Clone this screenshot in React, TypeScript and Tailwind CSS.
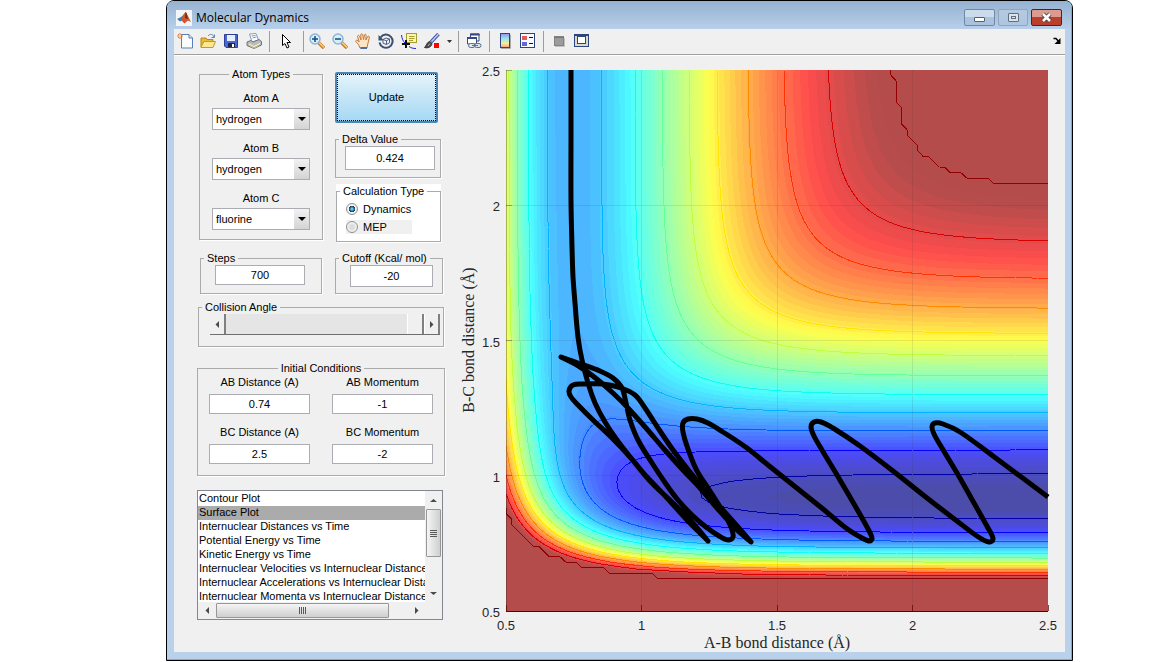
import { useMemo, useState } from "react"
import type { ReactNode } from "react"

/* ---------- potential surface ---------- */

const STEP = 0.02
const COUNT = 101
const CEILING = -22
const BANDS = 64

interface Bond {
  d: number
  beta: number
  re: number
  sato: number
}

const HH: Bond = { d: 109.449, beta: 1.942, re: 0.7419, sato: 0.18 }
const HF: Bond = { d: 141.196, beta: 2.2187, re: 0.917, sato: 0.18 }

function integrals(bond: Bond, r: number) {
  const e = Math.exp(-bond.beta * (r - bond.re))
  const f = bond.d / (4 * (1 + bond.sato))
  const k = bond.sato
  return {
    q: f * ((3 + k) * e * e - (2 + 6 * k) * e),
    j: f * ((1 + 3 * k) * e * e - (6 + 2 * k) * e),
  }
}

function potential(rab: number, rbc: number) {
  const a = integrals(HH, rab)
  const b = integrals(HF, rbc)
  const c = integrals(HF, rab + rbc)
  const ex = (a.j - b.j) ** 2 + (b.j - c.j) ** 2 + (c.j - a.j) ** 2
  return Math.min(CEILING, a.q + b.q + c.q - Math.sqrt(ex / 2))
}

// plot area inside the svg
const PX = 51
const PY = 13
const PW = 542
const PH = 541

const toX = (r: number) => PX + ((r - 0.5) / 2) * PW
const toY = (r: number) => PY + PH - ((r - 0.5) / 2) * PH

type Point = [number, number]
type Segment = { from: string; to: string; a: Point; b: Point; edge: boolean }

// The grid gets one extra node on each side, placed on the border itself,
// so that every region comes out as a closed loop.
function segments(grid: number[][], level: number): Segment[] {
  const n = COUNT + 2
  const value = (i: number, j: number) =>
    i === 0 || j === 0 || i === n - 1 || j === n - 1 ? -100000 : grid[j - 1][i - 1]
  const clamp = (i: number) => Math.min(COUNT - 1, Math.max(0, i - 1)) * STEP + 0.5
  const cross = (i: number, j: number, k: number, l: number): Point => {
    const v = value(i, j)
    const w = value(k, l)
    const t = (level - v) / (w - v)
    return [
      toX(clamp(i) + t * (clamp(k) - clamp(i))),
      toY(clamp(j) + t * (clamp(l) - clamp(j))),
    ]
  }
  const out: Segment[] = []
  for (let j = 0; j < n - 1; j++) {
    for (let i = 0; i < n - 1; i++) {
      const s = [value(i, j), value(i + 1, j), value(i + 1, j + 1), value(i, j + 1)].map((v) => v >= level)
      const hits: { key: string; p: Point }[] = []
      if (s[0] !== s[1]) hits.push({ key: `h${i},${j}`, p: cross(i, j, i + 1, j) })
      if (s[1] !== s[2]) hits.push({ key: `v${i + 1},${j}`, p: cross(i + 1, j, i + 1, j + 1) })
      if (s[3] !== s[2]) hits.push({ key: `h${i},${j + 1}`, p: cross(i, j + 1, i + 1, j + 1) })
      if (s[0] !== s[3]) hits.push({ key: `v${i},${j}`, p: cross(i, j, i, j + 1) })
      const edge = i === 0 || j === 0 || i === n - 2 || j === n - 2
      for (let k = 0; k + 1 < hits.length; k += 2) {
        out.push({ from: hits[k].key, to: hits[k + 1].key, a: hits[k].p, b: hits[k + 1].p, edge })
      }
    }
  }
  return out
}

const fmt = (p: Point) => `${p[0].toFixed(1)} ${p[1].toFixed(1)}`

function regionPath(segs: Segment[]) {
  const links = new Map<string, number[]>()
  segs.forEach((s, i) => {
    for (const key of [s.from, s.to]) {
      const list = links.get(key)
      if (list) list.push(i)
      else links.set(key, [i])
    }
  })
  const used = new Set<number>()
  let d = ""
  segs.forEach((first, start) => {
    if (used.has(start)) return
    used.add(start)
    d += `M${fmt(first.a)}L${fmt(first.b)}`
    let key = first.to
    for (;;) {
      const next = links.get(key)?.find((i) => !used.has(i))
      if (next === undefined) break
      used.add(next)
      const s = segs[next]
      const forward = s.from === key
      d += `L${fmt(forward ? s.b : s.a)}`
      key = forward ? s.to : s.from
    }
    d += "Z"
  })
  return d
}

function jet(t: number) {
  const u = Math.min(t, 0.98)
  const ch = (c: number) => Math.max(0, Math.min(1, 1.5 - Math.abs(4 * u - c)))
  return [ch(3), ch(2), ch(1)]
}

const solid = (t: number) => `rgb(${jet(t).map((c) => Math.round(c * 255)).join(",")})`
const faded = (t: number) => `rgb(${jet(t).map((c) => Math.round(76 + c * 179)).join(",")})`

function buildSurface() {
  const grid: number[][] = []
  let min = 0
  for (let j = 0; j < COUNT; j++) {
    const row: number[] = []
    for (let i = 0; i < COUNT; i++) {
      const v = potential(0.5 + i * STEP, 0.5 + j * STEP)
      min = Math.min(min, v)
      row.push(v)
    }
    grid.push(row)
  }
  const range = CEILING - min
  const bands = []
  for (let b = 1; b < BANDS; b++) {
    bands.push({
      color: faded((b + 0.5) / BANDS),
      d: regionPath(segments(grid, min + (range * b) / BANDS)),
    })
  }
  const lines = []
  for (let k = 0; k < 12; k++) {
    const level = CEILING - k * 10.4
    lines.push({
      color: solid((level - min) / range),
      d: segments(grid, level)
        .filter((s) => !s.edge)
        .map((s) => `M${fmt(s.a)}L${fmt(s.b)}`)
        .join(""),
    })
  }
  return { bands, lines }
}

/* ---------- trajectory ---------- */

// a repeated point marks a sharp turn
const TRAJECTORY: Point[] = [
  [116, 13], [116, 80], [116, 143], [117, 190], [118, 220], [120, 246], [123, 280], [127, 303],
  [133, 326], [140, 346], [150, 365], [162, 383], [176, 401], [195, 424], [218, 446], [236, 464], [253, 484], [253, 484],
  [233, 464], [212, 441], [192, 420], [175, 400], [157, 381], [138, 363], [123, 348], [116, 340], [114, 334], [118, 328],
  [129, 327], [148, 327], [166, 331], [180, 338], [190, 351], [203, 371], [218, 393], [235, 415], [250, 433],
  [267, 452], [283, 470], [296, 485], [296, 485],
  [280, 471], [262, 451], [245, 431], [227, 412], [209, 392], [191, 371], [173, 351], [159, 337], [143, 323], [125, 310], [106, 300], [106, 300],
  [126, 307], [145, 314], [158, 321], [167, 331], [171, 346], [175, 363], [183, 383], [197, 406], [211, 427],
  [223, 443], [237, 458], [251, 470], [264, 479], [273, 483], [278, 480], [276, 470], [268, 455], [255, 434], [242, 414],
  [233, 392], [228, 375], [228, 366], [233, 362], [242, 362], [253, 366], [268, 375], [292, 391], [313, 408],
  [338, 428], [368, 452], [391, 471], [407, 481], [415, 484], [417, 481], [412, 470], [399, 447], [382, 418],
  [367, 393], [359, 379], [356, 370], [359, 365], [366, 365], [378, 371], [405, 389], [438, 414], [472, 441],
  [502, 464], [522, 479], [534, 485], [538, 482], [533, 471], [519, 446], [502, 416], [487, 391], [479, 377],
  [477, 370], [480, 366], [488, 367], [505, 375], [538, 399], [565, 419], [593, 440],
]

function smooth(points: Point[]) {
  let d = `M${points[0][0]} ${points[0][1]}`
  for (let i = 0; i < points.length - 1; i++) {
    const p0 = points[Math.max(0, i - 1)]
    const p1 = points[i]
    const p2 = points[i + 1]
    const p3 = points[Math.min(points.length - 1, i + 2)]
    // keep handles short where neighbouring points are unevenly spaced
    const len = Math.hypot(p2[0] - p1[0], p2[1] - p1[1])
    const ta = Math.hypot(p2[0] - p0[0], p2[1] - p0[1]) || 1
    const tb = Math.hypot(p3[0] - p1[0], p3[1] - p1[1]) || 1
    const c1: Point = [p1[0] + ((p2[0] - p0[0]) / ta) * (len / 3), p1[1] + ((p2[1] - p0[1]) / ta) * (len / 3)]
    const c2: Point = [p2[0] - ((p3[0] - p1[0]) / tb) * (len / 3), p2[1] - ((p3[1] - p1[1]) / tb) * (len / 3)]
    d += `C${fmt(c1)} ${fmt(c2)} ${p2[0]} ${p2[1]}`
  }
  return d
}

const TICKS = [0.5, 1, 1.5, 2, 2.5]

function SurfacePlot() {
  const { bands, lines } = useMemo(buildSurface, [])
  return (
    <svg viewBox="0 0 610 595" className="block w-full" role="img" aria-label="Potential energy surface">
      <rect x={PX} y={PY} width={PW} height={PH} fill={faded(0.5 / BANDS)} />
      <g shapeRendering="crispEdges">
        {bands.map((band, i) => (
          <path key={i} d={band.d} fill={band.color} fillRule="evenodd" />
        ))}
        {lines.map((line, i) => (
          <path key={i} d={line.d} fill="none" stroke={line.color} />
        ))}
        {TICKS.slice(1, 4).map((t) => (
          <g key={t} stroke="#262626" strokeOpacity={0.1}>
            <path d={`M${toX(t)} ${PY}V${PY + PH}`} />
            <path d={`M${PX} ${toY(t)}H${PX + PW}`} />
          </g>
        ))}
        <path d={`M${PX} ${PY}V${PY + PH}`} stroke="#262626" strokeOpacity={0.35} />
        <path d={`M${PX} ${PY + PH}H${PX + PW}`} stroke="#5c0000" />
        {TICKS.map((t) => (
          <g key={t} strokeOpacity={0.7}>
            <path d={`M${toX(t)} ${PY + PH}v-6`} stroke="#5c0000" />
            <path d={`M${PX} ${toY(t)}h6`} stroke="#262626" strokeOpacity={0.35} />
          </g>
        ))}
      </g>
      <path d={smooth(TRAJECTORY)} fill="none" stroke="#000" strokeWidth={5} strokeLinejoin="round" />
      <g className="font-['Liberation_Sans',Arial,sans-serif] text-[13px]" fill="#262626">
        {TICKS.map((t) => (
          <g key={t}>
            <text x={toX(t)} y={573} textAnchor="middle">{t}</text>
            <text x={45} y={toY(t) + 6} textAnchor="end">{t}</text>
          </g>
        ))}
      </g>
      <g className="font-['Liberation_Serif',serif] text-[16px]" fill="#262626">
        <text x={322} y={591} textAnchor="middle">A-B bond distance (Å)</text>
        <text transform="translate(19 283) rotate(-90)" textAnchor="middle">B-C bond distance (Å)</text>
      </g>
    </svg>
  )
}

/* ---------- toolbar ---------- */

function Tool({ label, children, className = "w-4" }: { label: string; children: ReactNode; className?: string }) {
  return (
    <button type="button" aria-label={label} title={label} className={`h-4 shrink-0 ${className}`}>
      {children}
    </button>
  )
}

function Icon({ children }: { children: ReactNode }) {
  return (
    <svg width="16" height="16" viewBox="0 0 16 16" fill="none" className="block">
      {children}
    </svg>
  )
}

function Separator() {
  return <span className="h-[21px] w-px shrink-0 bg-[#9d9d9d]" />
}

function Magnifier({ plus }: { plus?: boolean }) {
  return (
    <Icon>
      <path d="M9.500 9.500L15 15" stroke="#b8742a" strokeWidth="3.400" />
      <path d="M10 9.500L15 14.300" stroke="#ffc56b" strokeWidth="1.800" />
      <circle cx="6" cy="6" r="5" fill="#d3f1fb" stroke="#8fb3d9" strokeWidth="1.500" />
      <path d={plus ? "M3 6H9M6 3V9" : "M3 6H9"} stroke="#17497c" strokeWidth="1.500" />
    </Icon>
  )
}

function Toolbar() {
  return (
    <div role="toolbar" className="flex h-[26px] items-center border-b border-[#a0a0a0] bg-[#f0f0f0] pr-1 pb-px pl-[3px]">
      <div className="flex items-center gap-[7px]">
        <Tool label="New Figure">
          <Icon>
            <path d="M4.500 1.500H12L15.500 5V15H4.500Z" fill="#fafdff" stroke="#5a7fb5" />
            <path d="M12 1.500V5H15.500" fill="#d5e4f7" stroke="#5a7fb5" />
            <path d="M3 0V6M0 3H6M1 1L5 5M5 1L1 5" stroke="#e2763a" />
            <circle cx="3" cy="3" r="1.200" fill="#ffd37a" />
          </Icon>
        </Tool>
        <Tool label="Open File">
          <Icon>
            <path d="M1 14V5H6L7 6.500H13V14Z" fill="#e8b93c" stroke="#b58a17" />
            <path d="M1 14L4 8.500H15.500L13 14.500H1Z" fill="#ffe78f" stroke="#c29a22" />
            <path d="M8 3C10 0.500 13 1 14 4M14.500 1.500V4.500H11.500" stroke="#5b84b5" />
          </Icon>
        </Tool>
        <Tool label="Save Figure">
          <Icon>
            <path d="M1.500 1.500H14.500V14.500H3L1.500 13Z" fill="#4c66d2" stroke="#2c3f9c" />
            <rect x="4" y="2" width="8" height="6" fill="#e6effc" />
            <rect x="5" y="10" width="7" height="4" fill="#1d2545" />
            <rect x="9" y="11" width="2" height="3" fill="#fff" />
          </Icon>
        </Tool>
        <Tool label="Print Figure">
          <Icon>
            <path d="M3.500 1L10 0.500L12.500 7L6 9Z" fill="#fff" stroke="#8d9bb0" />
            <path d="M5.500 3L9.500 2.500M6.500 5L10.500 4" stroke="#7b98c4" />
            <path d="M1 9L5 7.500L7 9L13 6.500L15.500 8.500V12L8 15.500L1 12.500Z" fill="#b9bdc1" stroke="#6e7276" />
            <path d="M3 11L8 13.500L14 10.500" stroke="#f4f4f4" />
            <path d="M4 13L8 15L12 13" stroke="#d6c53c" />
          </Icon>
        </Tool>
      </div>
      <div className="flex items-center gap-[10px] pl-[7px]">
        <Separator />
        <Tool label="Edit Plot" className="w-[13px]">
          <svg width="13" height="16" viewBox="0 0 13 16" className="block">
            <path d="M2.500 1.500V12.500L5 10.500L7 15L9 14L7 9.500H10.500Z" fill="#fff" stroke="#000" />
          </svg>
        </Tool>
        <Separator />
      </div>
      <div className="flex items-center gap-[7px] pl-[5px]">
        <Tool label="Zoom In"><Magnifier plus /></Tool>
        <Tool label="Zoom Out"><Magnifier /></Tool>
        <Tool label="Pan">
          <Icon>
            <path
              d="M5 15L3.500 11.500L0.800 8.500C0.500 7 2 6.800 3 7.800L4.200 9L2.500 3.500C2.500 2 4 2 4.500 3.300L6 7L5.800 1.800C6 0.500 7.500 0.500 7.800 1.800L8.500 6.500L9.500 1.800C10 0.800 11.300 1.200 11.200 2.500L10.800 7L12.800 3.500C13.600 2.800 14.800 3.500 14.300 4.800L12.800 11L12 15Z"
              fill="#ffe3c2"
              stroke="#c07a3e"
            />
            <path d="M5.500 15H12" stroke="#4b6fae" strokeWidth="2" />
          </Icon>
        </Tool>
        <Tool label="Rotate 3D">
          <Icon>
            <path d="M2.500 4.500A6.600 6.600 0 1 1 1.500 9.500" stroke="#3d4f70" strokeWidth="2" />
            <path d="M0.500 2V7.500H6Z" fill="#3d4f70" />
            <path d="M5 6.500L8 5L11.500 6V9.800L8.500 11.500L5 10.200ZM5 6.500L8.500 7.800L11.500 6M8.500 7.800V11.500" fill="#eef2f8" stroke="#4e6288" />
          </Icon>
        </Tool>
        <Tool label="Data Cursor">
          <Icon>
            <rect x="5.500" y="0.500" width="10" height="9" fill="#fbf6a8" stroke="#a59b35" />
            <path d="M8 3.500H13.500M8 5.500H13.500M8 7.500H12" stroke="#a59b35" />
            <path d="M0.500 2C1 6 2 8 4 10M8 13.500C10 15 12 15.500 15 15.500" stroke="#2222dd" />
            <path d="M5 7V15M1 11H9" stroke="#111" strokeWidth="2" />
          </Icon>
        </Tool>
        <Tool label="Brush Data">
          <Icon>
            <path d="M14.500 1L7 9" stroke="#4351a8" strokeWidth="3.500" />
            <path d="M14.500 1L7.500 8.500" stroke="#c5cdf7" strokeWidth="1.500" />
            <path d="M0.500 14.500C2.500 13 2.500 9.500 5.500 8.500L8 10.500C7.500 14 4 15.500 0.500 14.500Z" fill="#4b4b4b" stroke="#2e2e2e" />
            <path d="M4 13L6 10.500" stroke="#bbb" />
            <rect x="10" y="10" width="5" height="5" fill="#f00" />
          </Icon>
        </Tool>
        <Tool label="Brush colour" className="w-[5px]">
          <svg width="5" height="16" viewBox="0 0 5 16" className="block">
            <path d="M0 7H5L2.500 10Z" fill="#333" />
          </svg>
        </Tool>
      </div>
      <div className="flex items-center gap-[7px] pl-[6px]">
        <Separator />
        <Tool label="Link Plot">
          <Icon>
            <path d="M4.500 1H13V8H4.500Z" fill="#fff" stroke="#33497f" />
            <path d="M4 1.500H13.500" stroke="#33497f" strokeWidth="2" />
            <path d="M1.500 4.500H10.500V11H1.500Z" fill="#fff" stroke="#33497f" />
            <path d="M1 5H11" stroke="#33497f" strokeWidth="2" />
            <rect x="2.500" y="10.500" width="6.500" height="4" rx="2" fill="#dfe6ee" stroke="#57708d" />
            <rect x="8.500" y="10.500" width="6.500" height="4" rx="2" fill="#dfe6ee" stroke="#57708d" />
            <path d="M6 12.500H12" stroke="#57708d" />
          </Icon>
        </Tool>
        <Separator />
      </div>
      <div className="flex items-center gap-[7px] pl-[7px]">
        <Tool label="Insert Colorbar">
          <Icon>
            <defs>
              <linearGradient id="bar" x1="0" y1="0" x2="0" y2="1">
                <stop offset="0" stopColor="#a08cf0" />
                <stop offset="0.350" stopColor="#8fe3f0" />
                <stop offset="0.700" stopColor="#fbeb9c" />
                <stop offset="1" stopColor="#f3a47e" />
              </linearGradient>
            </defs>
            <path d="M13.500 1.500V15.500H4" stroke="#aaa" />
            <rect x="3.500" y="0.500" width="9" height="14" fill="url(#bar)" stroke="#2b4580" />
          </Icon>
        </Tool>
        <Tool label="Insert Legend">
          <Icon>
            <rect x="0.500" y="0.500" width="14" height="14" fill="#f8faff" stroke="#2b4580" />
            <rect x="2" y="3" width="5" height="4" fill="#e25c5c" />
            <rect x="2" y="9" width="5" height="4" fill="#6464e0" />
            <path d="M9 4.500H13M9 10.500H13" stroke="#111" />
          </Icon>
        </Tool>
        <Separator />
      </div>
      <div className="flex items-center gap-[7px] pl-[7px]">
        <Tool label="Hide Plot Tools">
          <Icon>
            <rect x="4" y="5" width="10" height="9" fill="#c4c4c4" />
            <rect x="3.500" y="3.500" width="9" height="9" fill="#9c9c9c" stroke="#828282" />
            <path d="M3 4.500H13" stroke="#777" />
          </Icon>
        </Tool>
        <Tool label="Show Plot Tools">
          <Icon>
            <rect x="0.500" y="1.500" width="14" height="12" fill="#d9d9cc" stroke="#2b4580" />
            <path d="M0 2H15" stroke="#2b4580" strokeWidth="2" />
            <rect x="3.500" y="3.500" width="8" height="7" fill="#fff" stroke="#2b4580" />
          </Icon>
        </Tool>
      </div>
      <button type="button" aria-label="Dock Figure" className="ml-auto">
        <svg width="8" height="8" viewBox="0 0 8 8" className="block">
          <path d="M0.500 1.500H3L6 5" fill="none" stroke="#000" strokeWidth="1.500" />
          <path d="M7.500 1V7H1.500Z" fill="#000" />
        </svg>
      </button>
    </div>
  )
}

/* ---------- window parts ---------- */

function TitleBar() {
  return (
    <header className="flex h-7 items-center rounded-t-md bg-linear-to-b from-[#95b2d0] to-[#b7cfea] px-[9px] pt-[5px]">
      <svg width="16" height="16" viewBox="0 0 16 16">
        <rect width="16" height="16" fill="#f3f6f9" />
        <path d="M1 9L5 7L7.500 5L6 10.500L4 11.500Z" fill="#3b7fb8" />
        <path d="M7 5L9.500 2L10.500 3L15 12L12 10.500L8.500 13.500L5.500 10.500Z" fill="#d6562b" />
        <path d="M9.500 2L10.500 3L12 9L9 8Z" fill="#7d2a16" />
      </svg>
      <h1 className="ml-1 font-['Open_Sans',sans-serif] text-[12px] text-black">Molecular Dynamics</h1>
      <div className="ml-auto flex gap-[3px]">
        <button type="button" aria-label="Minimize" className="flex h-[17px] w-[31px] items-center justify-center rounded-[2px] border border-[#6f88a5] bg-linear-to-b from-[#cbdbec] from-50% to-[#aac2dd] to-50%">
          <span className="mt-1 h-[5px] w-[11px] rounded-[1px] border border-[#53606f] bg-white" />
        </button>
        <button type="button" aria-label="Maximize" className="flex h-[17px] w-[30px] items-center justify-center rounded-[2px] border border-[#8da5be] bg-linear-to-b from-[#b5cae0] to-[#aec5df]">
          <span className="flex h-[9px] w-[11px] items-center justify-center rounded-[1px] border border-[#5f6f82] bg-[#dbe2ea]">
            <span className="h-[3px] w-[5px] border border-[#5f6f82]" />
          </span>
        </button>
        <button type="button" aria-label="Close" className="flex h-[17px] w-[31px] items-center justify-center rounded-[2px] border border-[#5b1d1a] bg-linear-to-b from-[#dd9a8e] from-45% to-[#bb3f2c] to-50%">
          <svg width="13" height="11" viewBox="0 0 13 11">
            <path d="M3 2L10 9M10 2L3 9" stroke="#54424a" strokeWidth="4.500" />
            <path d="M3 2L10 9M10 2L3 9" stroke="#fff" strokeWidth="2.500" />
          </svg>
        </button>
      </div>
    </header>
  )
}

interface GroupProps {
  title: string
  centered?: boolean
  className?: string
  bodyClassName?: string
  children: ReactNode
}

function Group({ title, centered, className = "", bodyClassName = "", children }: GroupProps) {
  return (
    <fieldset className={`min-w-0 border border-[#ababab] shadow-[1px_1px_0_#fff] ${className}`}>
      <legend className={`h-[14px] px-[3px] leading-[14px] whitespace-nowrap ${centered ? "mx-auto" : "ml-[3px]"}`}>{title}</legend>
      <div className={bodyClassName}>{children}</div>
    </fieldset>
  )
}

function AtomSelect({ id, label, initial }: { id: string; label: string; initial: string }) {
  return (
    <div>
      <label htmlFor={id} className="block text-center leading-[14px]">{label}</label>
      <div className="relative mt-[3px]">
        <select
          id={id}
          defaultValue={initial}
          className="block h-[22px] w-full appearance-none border border-[#abadb3] bg-white pl-[3px] outline-none"
        >
          <option value="hydrogen">hydrogen</option>
          <option value="fluorine">fluorine</option>
          <option value="chlorine">chlorine</option>
        </select>
        <span className="pointer-events-none absolute inset-y-px right-px flex w-[15px] items-center justify-center bg-linear-to-b from-[#f2f2f2] to-[#d4d4d4]">
          <svg width="8" height="4" viewBox="0 0 8 4">
            <path d="M0 0H8L4 4Z" fill="#000" />
          </svg>
        </span>
      </div>
    </div>
  )
}

function NumberBox({ id, label, initial, className = "" }: { id?: string; label?: string; initial: string; className?: string }) {
  const [value, setValue] = useState(initial)
  return (
    <input
      id={id}
      type="text"
      aria-label={label}
      value={value}
      onChange={(e) => setValue(e.target.value)}
      className={`block border border-[#abadb3] bg-white text-center outline-none ${className}`}
    />
  )
}

function Condition({ id, label, initial }: { id: string; label: string; initial: string }) {
  return (
    <div>
      <label htmlFor={id} className="mb-[5px] block text-center leading-[14px]">{label}</label>
      <NumberBox id={id} initial={initial} className="h-5 w-full" />
    </div>
  )
}

function CalculationType() {
  const [type, setType] = useState("Dynamics")
  return (
    <div className="mt-[6px] ml-px w-[105px] bg-white">
      <Group title="Calculation Type" className="h-[58px]" bodyClassName="pl-[9px] pt-1">
        {["Dynamics", "MEP"].map((name) => (
          <label
            key={name}
            className={`flex items-center gap-[5px] leading-[14px] ${name === "MEP" ? "mt-1 w-[66px] bg-[#f0f0f0]" : ""}`}
          >
            <input
              type="radio"
              name="calculation"
              value={name}
              checked={type === name}
              onChange={() => setType(name)}
              className="m-0 h-3 w-3 appearance-none rounded-full border border-[#8e8f8f] bg-[radial-gradient(circle,#dcdcdc_30%,#f6f6f6_70%)] checked:bg-[radial-gradient(circle,#5fc8ee_10%,#123a5c_42%,#f4f4f4_50%)]"
            />
            {name}
          </label>
        ))}
      </Group>
    </div>
  )
}

const PLOTS = [
  "Contour Plot",
  "Surface Plot",
  "Internuclear Distances vs Time",
  "Potential Energy vs Time",
  "Kinetic Energy vs Time",
  "Internuclear Velocities vs Internuclear Distance",
  "Internuclear Accelerations vs Internuclear Distance",
  "Internuclear Momenta vs Internuclear Distance",
]

function Arrow({ d }: { d: string }) {
  return (
    <svg width="7" height="7" viewBox="0 0 7 7">
      <path d={d} fill="#4a4a4a" />
    </svg>
  )
}

function PlotList() {
  const [plot, setPlot] = useState("Surface Plot")
  return (
    <div className="mt-[14px] -ml-[2px] grid h-[130px] w-[246px] grid-cols-[1fr_17px] grid-rows-[1fr_17px] border border-[#828790] bg-[#f0f0f0]">
      <select
        size={8}
        aria-label="Plot type"
        value={plot}
        onChange={(e) => setPlot(e.target.value)}
        className="block h-full w-full min-w-0 appearance-none overflow-hidden bg-white p-0 pt-px outline-none"
      >
        {PLOTS.map((name) => (
          <option
            key={name}
            value={name}
            className="h-[14px] min-h-0 overflow-hidden p-0 pl-px leading-[14px] text-black checked:bg-[linear-gradient(#ababab,#ababab)] checked:text-black"
          >
            {name}
          </option>
        ))}
      </select>
      <div className="flex flex-col items-center">
        <button type="button" aria-label="Scroll up" className="flex h-[18px] items-center"><Arrow d="M0 5H7L3.500 2Z" /></button>
        <span className="flex h-12 w-[15px] flex-col items-center justify-center gap-px rounded-[1px] border border-[#979797] bg-linear-to-r from-[#f5f5f5] to-[#cfcfd1]">
          <span className="h-px w-[7px] bg-[#5a5a5a]" />
          <span className="h-px w-[7px] bg-[#5a5a5a]" />
          <span className="h-px w-[7px] bg-[#5a5a5a]" />
          <span className="h-px w-[7px] bg-[#5a5a5a]" />
        </span>
        <button type="button" aria-label="Scroll down" className="mt-auto flex h-[17px] items-center"><Arrow d="M0 2H7L3.500 5Z" /></button>
      </div>
      <div className="flex items-center">
        <button type="button" aria-label="Scroll left" className="flex w-[18px] justify-center"><Arrow d="M5 0V7L1.500 3.500Z" /></button>
        <span className="flex h-[15px] w-[173px] items-center justify-center gap-px rounded-[1px] border border-[#979797] bg-linear-to-b from-[#f5f5f5] to-[#cfcfd1]">
          <span className="h-[7px] w-px bg-[#5a5a5a]" />
          <span className="h-[7px] w-px bg-[#5a5a5a]" />
          <span className="h-[7px] w-px bg-[#5a5a5a]" />
          <span className="h-[7px] w-px bg-[#5a5a5a]" />
        </span>
        <button type="button" aria-label="Scroll right" className="ml-auto flex w-[18px] justify-center"><Arrow d="M2 0V7L5.500 3.500Z" /></button>
      </div>
    </div>
  )
}

function Controls() {
  const [angle, setAngle] = useState(180)
  return (
    <form className="w-[281px] shrink-0 pl-[25px]" onSubmit={(e) => e.preventDefault()}>
      <div className="flex gap-[12px]">
        <Group title="Atom Types" centered className="mt-[10px] h-[173px] w-[124px]" bodyClassName="flex flex-col gap-[11px] px-3 pt-[10px]">
          <AtomSelect id="atom-a" label="Atom A" initial="hydrogen" />
          <AtomSelect id="atom-b" label="Atom B" initial="hydrogen" />
          <AtomSelect id="atom-c" label="Atom C" initial="fluorine" />
        </Group>
        <div className="w-[106px]">
          <button
            type="submit"
            className="mt-[15px] block h-[51px] w-[103px] rounded-[2px] border-2 border-[#4a87b5] bg-linear-to-b from-[#e5f4fc] from-0% via-[#c4e5f6] via-50% to-[#a5d9f5] outline-1 -outline-offset-3 outline-black outline-dotted"
          >
            Update
          </button>
          <Group title="Delta Value" className="mt-[9px] h-[46px]" bodyClassName="pl-[9px]">
            <NumberBox label="Delta Value" initial="0.424" className="h-6 w-[90px]" />
          </Group>
          <CalculationType />
        </div>
      </div>
      <div className="mt-[9px] ml-px flex gap-[13px]">
        <Group title="Steps" className="h-[43px] w-[122px]" bodyClassName="pl-[14px]">
          <NumberBox label="Steps" initial="700" className="h-5 w-[90px]" />
        </Group>
        <Group title="Cutoff (Kcal/ mol)" className="h-[43px] w-[108px]" bodyClassName="pl-[14px]">
          <NumberBox label="Cutoff" initial="-20" className="h-[22px] w-[83px]" />
        </Group>
      </div>
      <Group title="Collision Angle" className="mt-[6px] -ml-px h-[47px] w-[246px]" bodyClassName="pl-[11px]">
        <div className="flex h-[21px] w-[230px] border-b border-[#6f6f6f] bg-[#e5e5e5]">
          <button type="button" aria-label="Decrease angle" onClick={() => setAngle(Math.max(0, angle - 1))} className="flex w-4 items-center justify-center border-r-2 border-[#808080] bg-[#f0f0f0]">
            <Arrow d="M5 0V7L1.500 3.500Z" />
          </button>
          <input
            type="range"
            aria-label="Collision Angle"
            min={0}
            max={180}
            value={angle}
            onChange={(e) => setAngle(Number(e.target.value))}
            className="m-0 h-full min-w-0 flex-1 appearance-none bg-transparent outline-none [&::-webkit-slider-thumb]:h-5 [&::-webkit-slider-thumb]:w-[17px] [&::-webkit-slider-thumb]:appearance-none [&::-webkit-slider-thumb]:border-r-2 [&::-webkit-slider-thumb]:border-l [&::-webkit-slider-thumb]:border-l-white [&::-webkit-slider-thumb]:border-r-[#808080] [&::-webkit-slider-thumb]:bg-[#f0f0f0]"
          />
          <button type="button" aria-label="Increase angle" onClick={() => setAngle(Math.min(180, angle + 1))} className="flex w-4 items-center justify-center border-r-2 border-l border-r-[#808080] border-l-white bg-[#f0f0f0]">
            <Arrow d="M2 0V7L5.500 3.500Z" />
          </button>
        </div>
      </Group>
      <Group title="Initial Conditions" centered className="mt-[14px] -ml-[2px] h-[115px] w-[248px]" bodyClassName="px-[11px]">
        <div className="grid grid-cols-2 gap-x-[22px] gap-y-[11px]">
          <Condition id="ab-distance" label="AB Distance (A)" initial="0.74" />
          <Condition id="ab-momentum" label="AB Momentum" initial="-1" />
          <Condition id="bc-distance" label="BC Distance (A)" initial="2.5" />
          <Condition id="bc-momentum" label="BC Momentum" initial="-2" />
        </div>
      </Group>
      <PlotList />
    </form>
  )
}

export default function App() {
  return (
    <div className="min-h-screen bg-white pr-[79px] pl-[166px] font-['Liberation_Sans',Arial,sans-serif] text-[11px] text-black">
      <div className="rounded-t-lg border border-black bg-[#b9d1ea]">
        <div className="rounded-t-md border-r border-b border-[#3ec6e0]">
          <TitleBar />
          <div className="mr-[6px] mb-[7px] ml-[7px] bg-[#f0f0f0]">
            <Toolbar />
            <main className="flex items-start border-t border-white pt-px">
              <Controls />
              <div className="min-w-0 flex-1">
                <SurfacePlot />
              </div>
            </main>
          </div>
        </div>
      </div>
    </div>
  )
}
